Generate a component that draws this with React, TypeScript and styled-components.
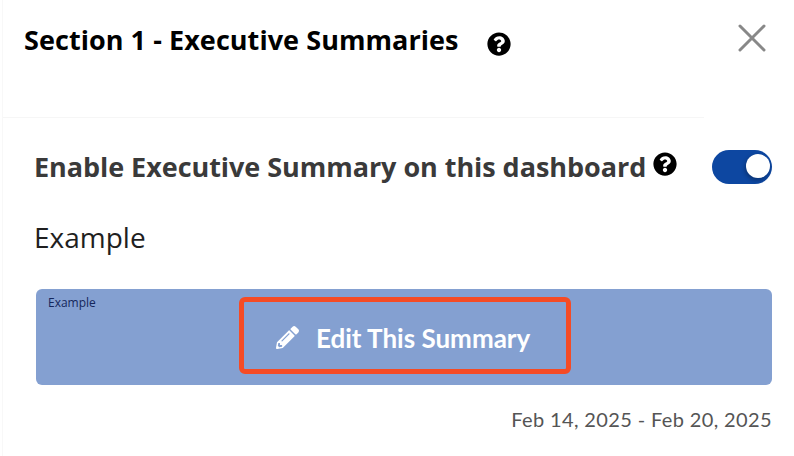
import React from 'react';
import styled, { createGlobalStyle } from 'styled-components';
import { FaPencilAlt, FaQuestionCircle } from 'react-icons/fa';

const GlobalStyle = createGlobalStyle`
  html, body {
    margin: 0;
    padding: 0;
    background: #fff;
    overflow: hidden;
  }
`;

const Modal = styled.div`
  position: relative;
  width: 794px;
  height: 456px;
  margin-left: 2px;
  border-left: 1px solid #f8f8f8;
  box-sizing: border-box;
  font-family: 'Open Sans', 'Liberation Sans', sans-serif;
`;

const Header = styled.div`
  width: 701px;
  height: 118px;
  box-sizing: border-box;
  border-bottom: 1px solid #f6f6f6;
  padding: 21px 0 0 21px;
  display: flex;
  align-items: flex-start;
`;

const Title = styled.h1`
  margin: 0;
  font-size: 27px;
  letter-spacing: 0.06px;
  line-height: 38px;
  font-weight: 700;
  color: #000;
`;

const HelpIcon = styled(FaQuestionCircle)<{ $size: number }>`
  flex: none;
  width: ${(p) => p.$size}px;
  height: ${(p) => p.$size}px;
  color: #000;
`;

const HeaderHelp = styled.span`
  display: flex;
  margin: 11px 0 0 28px;
`;

const CloseButton = styled.button`
  position: absolute;
  top: 24px;
  left: 735px;
  width: 28px;
  height: 28px;
  padding: 0;
  border: 0;
  background: none;
  display: flex;
`;

const Body = styled.div`
  width: 769px;
  padding: 31px 0 0 31px;
  box-sizing: border-box;
`;

const ToggleRow = styled.div`
  display: flex;
  align-items: center;
  height: 36px;
`;

const ToggleLabel = styled.span`
  font-size: 27px;
  letter-spacing: -0.05px;
  font-weight: 700;
  color: #3a3a3a;
  line-height: 36px;
`;

const ToggleHelp = styled.span`
  display: flex;
  margin: -6px 0 0 7px;
`;

const Toggle = styled.span`
  position: relative;
  flex: none;
  width: 60px;
  height: 34px;
  margin-left: auto;
  border-radius: 17px;
  background: #0d47a1;
`;

const Knob = styled.span`
  position: absolute;
  top: 4px;
  right: 2px;
  width: 24px;
  height: 24px;
  border-radius: 50%;
  background: #fff;
  box-shadow: -1px 2px 4px rgba(0, 0, 0, 0.3);
`;

const SubTitle = styled.div`
  margin-top: 34px;
  font-size: 28px;
  line-height: 36px;
  color: #1f1f1f;
`;

const Banner = styled.div`
  position: relative;
  display: flex;
  height: 96px;
  margin: 34px 0 0 2px;
  padding: 8px 0 0 203px;
  box-sizing: border-box;
  border-radius: 6px;
  background: #84a0d1;
`;

const BannerLabel = styled.span`
  position: absolute;
  top: 7px;
  left: 12px;
  font-size: 12px;
  line-height: 14px;
  color: #14275c;
`;

const EditBox = styled.div`
  width: 332px;
  height: 77px;
  box-sizing: border-box;
  border: 5px solid #f54b25;
  border-radius: 6px;
  padding: 4px 0 0 32px;
  display: flex;
  align-items: center;
  gap: 17px;
  font-family: Lato, 'Liberation Sans', sans-serif;
  font-size: 26px;
  font-weight: 700;
  color: #fff;
`;

const Pencil = styled(FaPencilAlt)`
  width: 23px;
  height: 23px;
`;

const DateRange = styled.div`
  margin-top: 22px;
  text-align: right;
  font-family: Lato, 'Liberation Sans', sans-serif;
  font-size: 20px;
  letter-spacing: 0.37px;
  line-height: 24px;
  color: #555;
`;

function App() {
  return (
    <Modal>
      <GlobalStyle />
      <Header>
        <Title>Section 1 - Executive Summaries</Title>
        <HeaderHelp>
          <HelpIcon $size={24} />
        </HeaderHelp>
      </Header>
      <CloseButton>
        <svg width="28" height="28" viewBox="0 0 28 28">
          <path d="M2 2L26 26M26 2L2 26" stroke="#888" strokeWidth="3" strokeLinecap="round" />
        </svg>
      </CloseButton>
      <Body>
        <ToggleRow>
          <ToggleLabel>Enable Executive Summary on this dashboard</ToggleLabel>
          <ToggleHelp>
            <HelpIcon $size={24} />
          </ToggleHelp>
          <Toggle>
            <Knob />
          </Toggle>
        </ToggleRow>
        <SubTitle>Example</SubTitle>
        <Banner>
          <BannerLabel>Example</BannerLabel>
          <EditBox>
            <Pencil />
            Edit This Summary
          </EditBox>
        </Banner>
        <DateRange>Feb 14, 2025 - Feb 20, 2025</DateRange>
      </Body>
    </Modal>
  );
}

export default App;
